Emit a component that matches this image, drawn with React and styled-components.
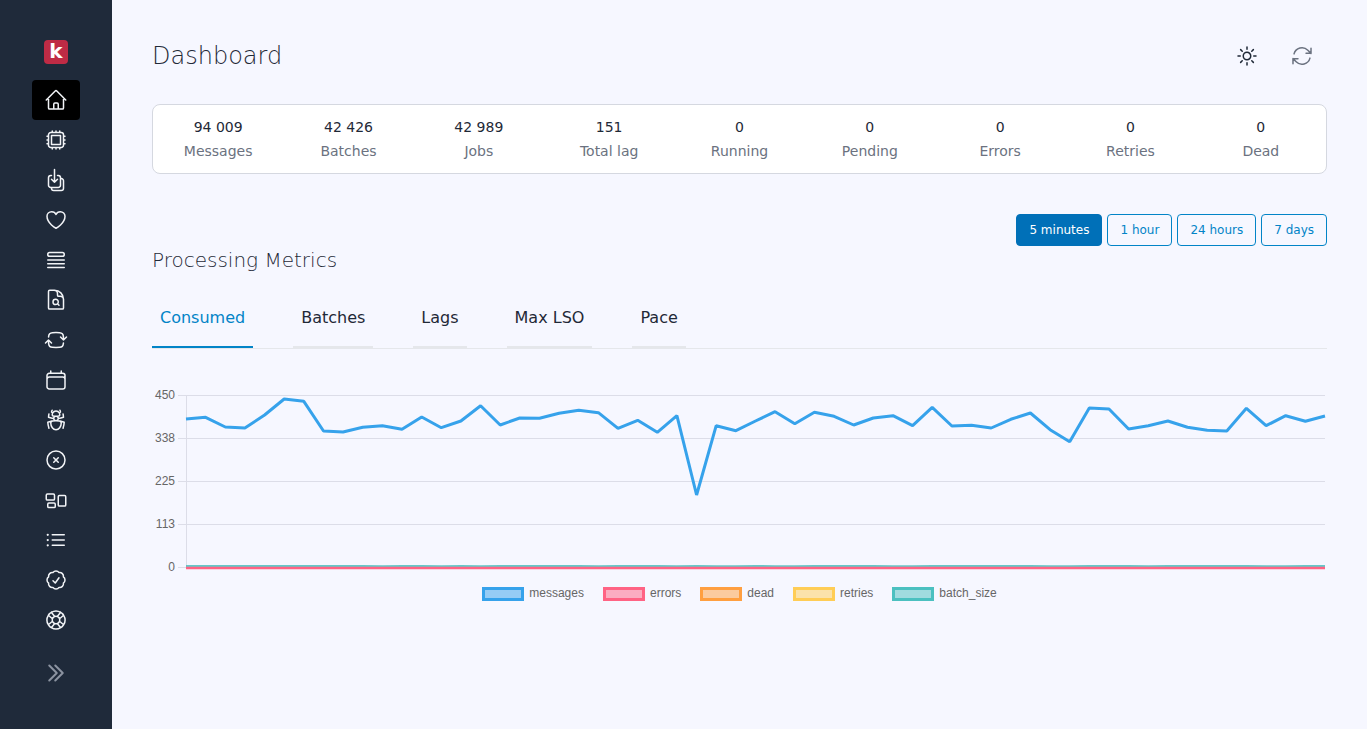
import React from 'react';
import styled, { createGlobalStyle } from 'styled-components';
import {
  HiOutlineHome, HiOutlineCpuChip, HiOutlineArrowDownOnSquareStack, HiOutlineHeart,
  HiOutlineQueueList, HiOutlineDocumentMagnifyingGlass, HiOutlineArrowPathRoundedSquare,
  HiOutlineCalendar, HiOutlineBugAnt, HiOutlineXCircle, HiOutlineRectangleGroup,
  HiOutlineListBullet, HiOutlineCheckBadge, HiOutlineLifebuoy, HiOutlineChevronDoubleRight,
  HiOutlineSun, HiOutlineArrowPath,
} from 'react-icons/hi2';

const navIcons = [
  HiOutlineHome, HiOutlineCpuChip, HiOutlineArrowDownOnSquareStack, HiOutlineHeart,
  HiOutlineQueueList, HiOutlineDocumentMagnifyingGlass, HiOutlineArrowPathRoundedSquare,
  HiOutlineCalendar, HiOutlineBugAnt, HiOutlineXCircle, HiOutlineRectangleGroup,
  HiOutlineListBullet, HiOutlineCheckBadge, HiOutlineLifebuoy,
];

const stats = [
  ['94 009', 'Messages'], ['42 426', 'Batches'], ['42 989', 'Jobs'], ['151', 'Total lag'],
  ['0', 'Running'], ['0', 'Pending'], ['0', 'Errors'], ['0', 'Retries'], ['0', 'Dead'],
];

const ranges = ['5 minutes', '1 hour', '24 hours', '7 days'];
const tabs = ['Consumed', 'Batches', 'Lags', 'Max LSO', 'Pace'];

const legend = [
  ['messages', '#36a2eb', 'rgba(54,162,235,.5)'],
  ['errors', '#ff6384', 'rgba(255,99,132,.5)'],
  ['dead', '#ff9f40', 'rgba(255,159,64,.5)'],
  ['retries', '#ffcd56', 'rgba(255,205,86,.5)'],
  ['batch_size', '#4bc0c0', 'rgba(75,192,192,.5)'],
];

// pixel y of each sample of the messages line
const samples = [
  419, 417.3, 427, 428, 415, 399, 401.3, 431, 432, 427.3, 425.7, 429.3, 417, 427.7, 421,
  405.7, 425, 418, 418.3, 413.3, 410.3, 412.7, 428.3, 420.3, 432.3, 415.7, 495, 425.7, 430.7,
  421, 411.7, 423.7, 412.3, 416.3, 425, 418, 415.7, 425.7, 407.3, 426, 425.3, 428, 419.3, 413,
  429.7, 441.7, 408, 409, 429, 425.7, 421, 427.3, 430.3, 431, 408.3, 425.7, 415.7, 421.3, 416,
];
const step = (1325 - 186) / (samples.length - 1);
const messagesLine = samples.map((y, i) => `${(186 + i * step).toFixed(1)},${y}`).join(' ');
const batchLine = samples.map((y, i) => `${(186 + i * step).toFixed(1)},${(565.9 + (y % 1) * 0.4).toFixed(2)}`).join(' ');

const grid = [[395, '450'], [438, '338'], [481, '225'], [524, '113'], [567, '0']];

const GlobalStyle = createGlobalStyle`
  html, body { margin: 0; padding: 0; background: #f6f7ff; }
  body { font-family: "DejaVu Sans", sans-serif; }
`;

const Layout = styled.div`
  display: flex;
  min-height: 729px;
`;

const Sidebar = styled.aside`
  width: 112px;
  flex: none;
  background: #1f2a3a;
  display: flex;
  flex-direction: column;
  align-items: center;
  padding-top: 40px;
  box-sizing: border-box;
`;

const Logo = styled.div`
  width: 24px;
  height: 24px;
  border-radius: 4px;
  background: #bf2b45;
  color: #fff;
  font: bold 20px/23px "DejaVu Sans", sans-serif;
  text-align: center;
  margin-bottom: 16px;
`;

const NavItem = styled.a`
  width: 48px;
  height: 40px;
  display: flex;
  align-items: center;
  justify-content: center;
  border-radius: 4px;
  color: #f2f4f7;
  background: ${(p) => (p.$active ? '#000' : 'transparent')};
  font-size: 24px;
`;

const Collapse = styled.div`
  margin-top: 21px;
  height: 24px;
  color: #8b93a0;
  font-size: 24px;
  line-height: 0;

  svg {
    stroke-width: 2;
  }
`;

const Main = styled.main`
  flex: 1;
  min-width: 0;
  padding: 30px 40px 0;
`;

const Header = styled.header`
  height: 50px;
  display: flex;
  align-items: center;
  justify-content: space-between;
  margin-bottom: 24px;
`;

const Title = styled.h1`
  margin: 2px 0 0;
  font-size: 24px;
  font-weight: 200;
  color: #1f2937;
`;

const HeaderActions = styled.div`
  display: flex;
  gap: 5px;
  margin-top: 2px;
`;

const IconButton = styled.button`
  width: 50px;
  height: 48px;
  padding: 0;
  border: 0;
  background: none;
  display: flex;
  align-items: center;
  justify-content: center;
  font-size: 24px;
  color: ${(p) => p.$color};
`;

const StatsCard = styled.section`
  display: grid;
  grid-template-columns: repeat(9, 1fr);
  height: 70px;
  box-sizing: border-box;
  background: #fff;
  border: 1px solid #d5d8e0;
  border-radius: 8px;
`;

const Stat = styled.div`
  text-align: center;
  padding-top: 12px;
  font-size: 14px;
  line-height: 20px;
`;

const StatValue = styled.div`
  color: #1f2937;
  margin-bottom: 4px;
`;

const StatLabel = styled.div`
  color: #6b7280;
`;

const Ranges = styled.div`
  display: flex;
  justify-content: flex-end;
  gap: 5px;
  margin-top: 40px;
`;

const RangeButton = styled.button`
  height: 32px;
  padding: 0 12px;
  border: 1px solid #0284c7;
  border-radius: 4px;
  font: 12px "DejaVu Sans", sans-serif;
  color: ${(p) => (p.$active ? '#fff' : '#0284c7')};
  background: ${(p) => (p.$active ? '#0070b8' : 'transparent')};
  border-color: ${(p) => (p.$active ? '#0070b8' : '#0284c7')};
`;

const SectionTitle = styled.h2`
  margin: 2px 0 0;
  font-size: 20px;
  line-height: 24px;
  font-weight: 200;
  color: #1f2937;
`;

const Tabs = styled.nav`
  display: flex;
  gap: 40px;
  margin-top: 28px;
  border-bottom: 1px solid #e5e7eb;
`;

const Tab = styled.a`
  padding: 0 8px;
  height: 48px;
  box-sizing: border-box;
  font-size: 16px;
  line-height: 36px;
  color: ${(p) => (p.$active ? '#0284c7' : '#1f2937')};
  border-bottom: 2px solid ${(p) => (p.$active ? '#0284c7' : '#e5e7eb')};
`;

const Chart = styled.svg`
  display: block;
  margin-top: 36px;
  width: 1175px;
  height: 195px;
`;

const Legend = styled.ul`
  display: flex;
  justify-content: center;
  gap: 19px;
  list-style: none;
  margin: 6px 0 0;
  padding: 0;
  font: 12px/15px "Liberation Sans", Arial, sans-serif;
  color: #666;
`;

const LegendItem = styled.li`
  display: flex;
  align-items: center;
  gap: 5px;
`;

const Swatch = styled.span`
  width: 42px;
  height: 14px;
  box-sizing: border-box;
  border: 3px solid ${(p) => p.$line};
  background: ${(p) => p.$fill};
  background-clip: padding-box;
`;

export default function App() {
  return (
    <>
      <GlobalStyle />
      <Layout>
        <Sidebar>
          <Logo>k</Logo>
          {navIcons.map((Icon, i) => (
            <NavItem key={i} $active={i === 0}><Icon /></NavItem>
          ))}
          <Collapse><HiOutlineChevronDoubleRight /></Collapse>
        </Sidebar>

        <Main>
          <Header>
            <Title>Dashboard</Title>
            <HeaderActions>
              <IconButton $color="#1f2937"><HiOutlineSun /></IconButton>
              <IconButton $color="#6b7280"><HiOutlineArrowPath /></IconButton>
            </HeaderActions>
          </Header>

          <StatsCard>
            {stats.map(([value, label]) => (
              <Stat key={label}>
                <StatValue>{value}</StatValue>
                <StatLabel>{label}</StatLabel>
              </Stat>
            ))}
          </StatsCard>

          <Ranges>
            {ranges.map((r, i) => (
              <RangeButton key={r} $active={i === 0}>{r}</RangeButton>
            ))}
          </Ranges>

          <SectionTitle>Processing Metrics</SectionTitle>

          <Tabs>
            {tabs.map((t, i) => (
              <Tab key={t} $active={i === 0}>{t}</Tab>
            ))}
          </Tabs>

          <Chart viewBox="152 385 1175 195">
            {grid.map(([y, label]) => (
              <g key={label}>
                <line x1="178" x2="1325" y1={y + 0.5} y2={y + 0.5} stroke="#dcdde8" strokeWidth="1" />
                <text x="175" y={y + 4} textAnchor="end" fontFamily="Liberation Sans, Arial, sans-serif" fontSize="12" fill="#666">{label}</text>
              </g>
            ))}
            <line x1="186.5" x2="186.5" y1="395" y2="567" stroke="#dcdde8" />
            <polyline points={messagesLine} fill="none" stroke="#36a2eb" strokeWidth="3" strokeLinejoin="bevel" />
            <polyline points={batchLine} fill="none" stroke="#4bc0c0" strokeWidth="2" opacity="0.85" />
            <line x1="186" x2="1325" y1="568" y2="568" stroke="#ff6384" strokeWidth="2.5" />
          </Chart>

          <Legend>
            {legend.map(([name, line, fill]) => (
              <LegendItem key={name}>
                <Swatch $line={line} $fill={fill} />
                {name}
              </LegendItem>
            ))}
          </Legend>
        </Main>
      </Layout>
    </>
  );
}
